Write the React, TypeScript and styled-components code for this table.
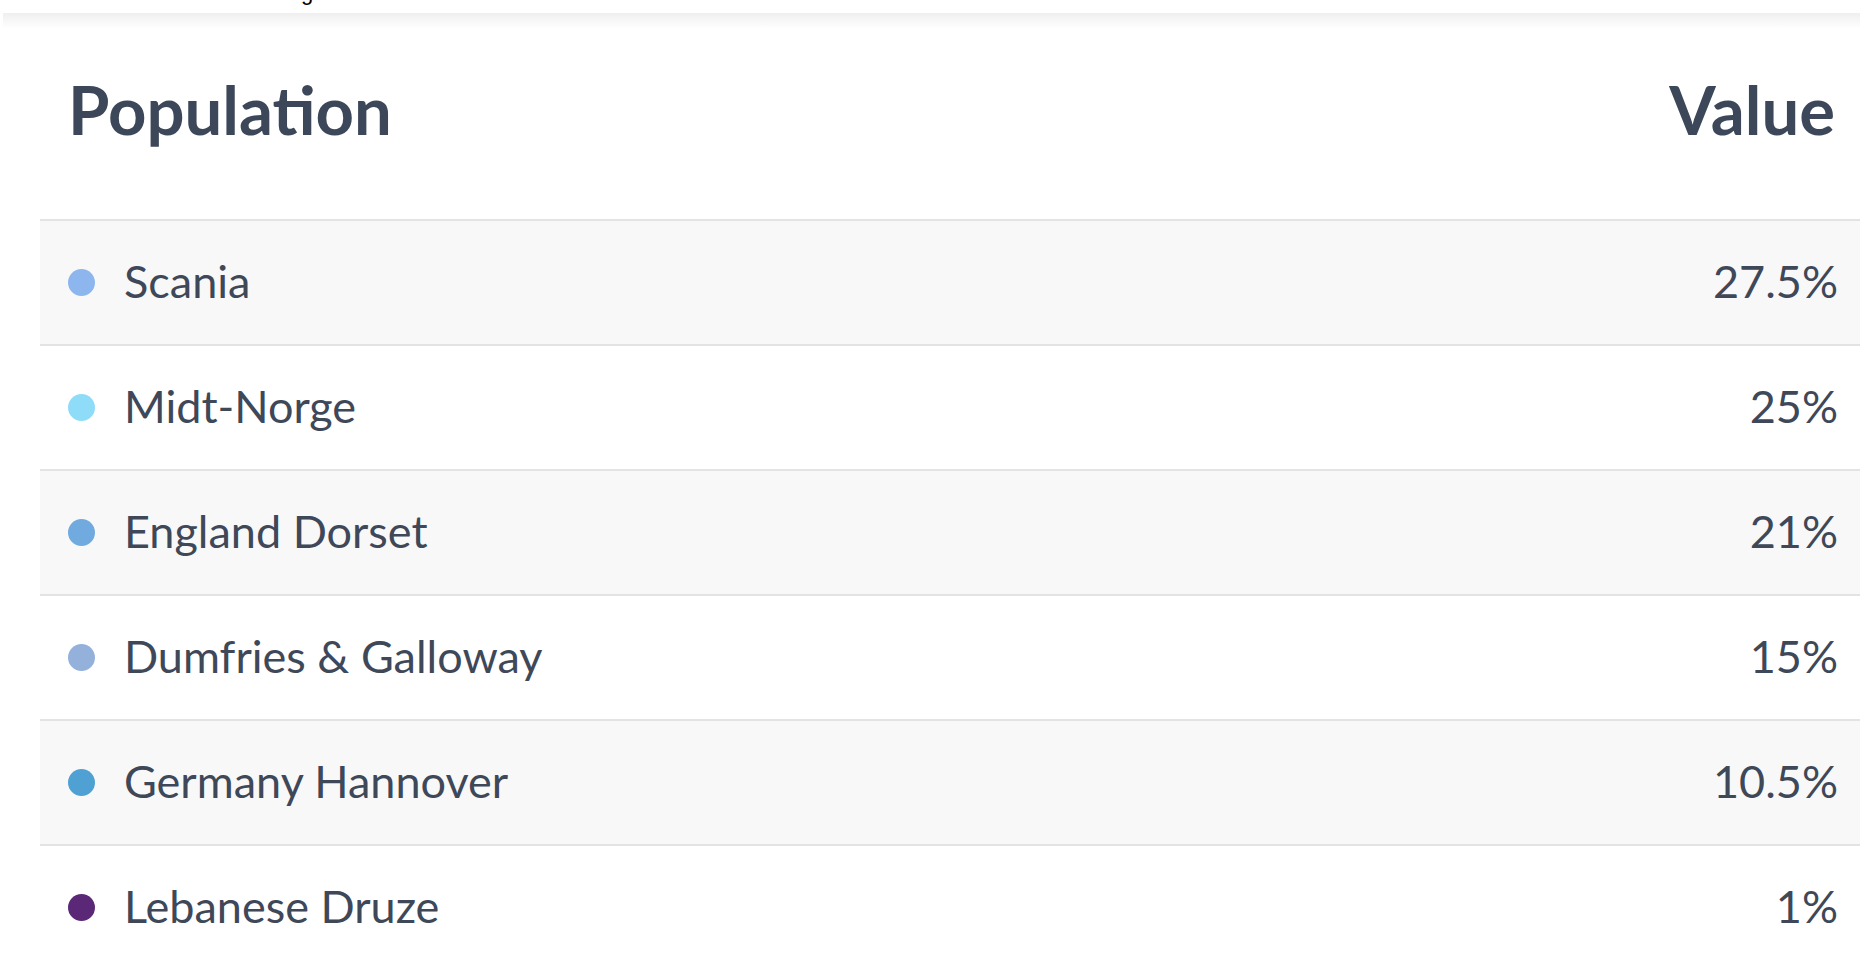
import styled, { createGlobalStyle } from "styled-components";

const GlobalStyle = createGlobalStyle`
  html, body {
    margin: 0;
    padding: 0;
    background: #ffffff;
  }
  body {
    font-family: Lato, "Open Sans", "Liberation Sans", sans-serif;
    overflow: hidden;
  }
`;

const rows = [
  { name: "Scania", value: "27.5%", color: "#8db6ee" },
  { name: "Midt-Norge", value: "25%", color: "#8fdcf9" },
  { name: "England Dorset", value: "21%", color: "#70aade" },
  { name: "Dumfries & Galloway", value: "15%", color: "#94b1dc" },
  { name: "Germany Hannover", value: "10.5%", color: "#4fa0d3" },
  { name: "Lebanese Druze", value: "1%", color: "#5a2876" },
];

// title above is scrolled out, only a descender peeks in
const CutCaption = styled.div`
  height: 13px;
  overflow: hidden;
  position: relative;
  font-family: "Liberation Sans", sans-serif;
  font-size: 22px;
  color: #000;
`;

const CaptionText = styled.span`
  position: absolute;
  left: 301px;
  bottom: 9px;
  line-height: 22px;
`;

const ShadowBand = styled.div`
  height: 15px;
  margin-left: 3px;
  background: linear-gradient(#efefef, #fbfbfb 80%, #ffffff);
`;

const Table = styled.div`
  margin-left: 40px;
  display: flex;
  flex-direction: column;
`;

const HeaderRow = styled.div`
  display: flex;
  justify-content: space-between;
  align-items: center;
  padding: 43px 25px 72px 28px;
  border-bottom: 2px solid #e3e3e3;
`;

const HeaderCell = styled.div`
  font-size: 67px;
  line-height: 76px;
  font-weight: 700;
  color: #3c4759;
`;

const Row = styled.div<{ $striped: boolean }>`
  display: flex;
  align-items: center;
  justify-content: space-between;
  height: 123px;
  padding: 0 22px 0 28px;
  background: ${(p) => (p.$striped ? "#f8f8f8" : "#ffffff")};
  border-bottom: 2px solid #e3e3e3;
`;

const NameCell = styled.div`
  display: flex;
  align-items: center;
  gap: 29px;
`;

const Dot = styled.span<{ $color: string }>`
  width: 27px;
  height: 27px;
  border-radius: 50%;
  background: ${(p) => p.$color};
  flex-shrink: 0;
`;

const Label = styled.span`
  font-size: 45px;
  line-height: 54px;
  margin-bottom: 4px;
  color: #3e4858;
`;

export default function App() {
  return (
    <>
      <GlobalStyle />
      <CutCaption>
        <CaptionText>g</CaptionText>
      </CutCaption>
      <ShadowBand />
      <Table>
        <HeaderRow>
          <HeaderCell>Population</HeaderCell>
          <HeaderCell>Value</HeaderCell>
        </HeaderRow>
        {rows.map((r, i) => (
          <Row key={r.name} $striped={i % 2 === 0}>
            <NameCell>
              <Dot $color={r.color} />
              <Label>{r.name}</Label>
            </NameCell>
            <Label>{r.value}</Label>
          </Row>
        ))}
      </Table>
    </>
  );
}
